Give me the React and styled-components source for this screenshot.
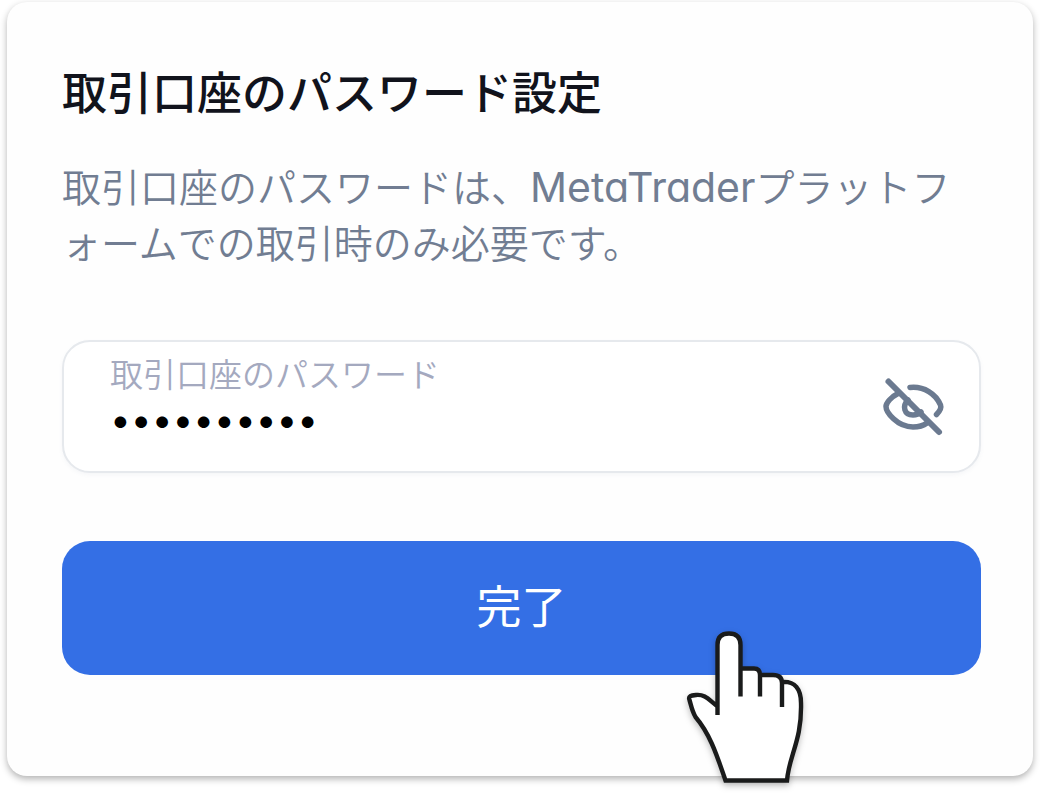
import React, { useState } from "react";
import styled, { createGlobalStyle } from "styled-components";

const GlobalStyle = createGlobalStyle`
  *, *::before, *::after { box-sizing: border-box; }
  body {
    margin: 0;
    background: #ffffff;
    font-family: Inter, "Noto Sans CJK JP", sans-serif;
    font-feature-settings: "cv11";
  }
`;

const Page = styled.main`
  padding: 2px 7px 24px;
`;

const Card = styled.form`
  display: flex;
  flex-direction: column;
  padding: 62px 52px 101px 55px;
  border-radius: 20px;
  background: #fefefe;
  box-shadow: 0 3px 7px rgba(0, 0, 0, 0.3);
`;

const Title = styled.h1`
  margin: 0 0 36px;
  font-size: 45px;
  line-height: 60px;
  font-weight: 500;
  color: #11131c;
`;

const Description = styled.p`
  margin: 0 0 68px;
  font-size: 39px;
  line-height: 56px;
  font-weight: 350;
  color: #717d92;
`;

const Brand = styled.span`
  font-size: 41px;
  line-height: 40px;
  font-weight: 400;
`;

const Field = styled.div`
  display: flex;
  align-items: center;
  gap: 24px;
  margin-bottom: 68px;
  padding: 0 33px 0 46px;
  border: 2px solid #e6e9ed;
  border-radius: 28px;
  background: #ffffff;
  box-shadow: 0 2px 4px rgba(100, 120, 150, 0.06);
`;

const FieldText = styled.div`
  display: flex;
  flex: 1;
  flex-direction: column;
  min-width: 0;
  padding: 9px 0 31px;
`;

const Label = styled.label`
  font-size: 33px;
  line-height: 48px;
  font-weight: 350;
  color: #a4a9bf;
`;

const Input = styled.input`
  width: 100%;
  height: 41px;
  padding: 0;
  border: 0;
  outline: 0;
  background: transparent;
  color: #000000;
  font-family: Inter, sans-serif;
  font-size: 37px;
  line-height: 40px;
`;

const IconButton = styled.button`
  display: flex;
  padding: 0;
  border: 0;
  background: transparent;
  color: #6b7a90;
  cursor: pointer;
`;

const Actions = styled.div`
  position: relative;
`;

const SubmitButton = styled.button`
  display: block;
  width: 100%;
  padding: 37px 24px;
  border: 0;
  border-radius: 28px;
  background: #346fe5;
  color: #ffffff;
  font-family: inherit;
  font-size: 45px;
  line-height: 60px;
  font-weight: 400;
  cursor: pointer;
`;

const Pointer = styled.svg`
  position: absolute;
  top: 88px;
  right: 175px;
  pointer-events: none;
  filter: drop-shadow(0 3px 3px rgba(0, 0, 0, 0.25));
`;

function EyeOff() {
  return (
    <svg width="64" height="60" viewBox="0 0 64 60" fill="none" stroke="currentColor" strokeWidth="5.5" strokeLinecap="round" strokeLinejoin="round" aria-hidden="true">
      <path d="M6.5 4.5 L57 55" strokeWidth="6" />
      <path d="M28 10.5 C42 9 54 17 58.5 28 C60 32 57 35 54.5 37.5" />
      <path d="M16 16.5 C9 20 4 26 4 29.5 C4 35 15 50 31 50 C36 50 41 49 45 46" />
      <path d="M26 23 C20 29 22 38 31 38 C34 38 37 37 39 35" />
    </svg>
  );
}

function HandPointer() {
  return (
    <Pointer width="120" height="164" viewBox="0 0 120 164" aria-hidden="true">
      <path
        d="M31.5 77 V16 Q31.5 4.5 43 4.5 Q54.5 4.5 54.5 16 V39.5 H68 Q74 39.5 74 46 H87 Q96 46 96 53 C109 53 115 60 115 74 C116 112 103 126 101 151.5 H39.5 C32 130 25 106 9.5 88 C6 82 5 76 3.5 71 C2 67 5 66.5 10 66 C19 65 23 71 31.5 77 Z"
        fill="#ffffff"
      />
      <path
        d="M31.5 86 V16 Q31.5 4.5 43 4.5 Q54.5 4.5 54.5 16 V67.5 M54.5 39.5 H68 Q74 39.5 74 46 V67.5 M74 46 H87 Q96 46 96 54 V78 M96 53 C109 52 115 60 115 74 C116 112 103 126 101 151.5 H39.5 C32 130 25 106 9.5 88 C6 82 5 76 3.5 71 C2 67 5 66.5 10 66 C19 65 23 71 31 77"
        fill="none"
        stroke="#1a1b1b"
        strokeWidth="4.4"
      />
    </Pointer>
  );
}

export default function App() {
  const [visible, setVisible] = useState(false);
  const [password, setPassword] = useState("Trading#24");
  return (
    <>
      <GlobalStyle />
      <Page lang="ja">
        <Card onSubmit={(event) => event.preventDefault()}>
          <Title>取引口座のパスワード設定</Title>
          <Description>
            取引口座のパスワードは、<Brand>MetaTrader</Brand>プラットフォームでの取引時のみ必要です。
          </Description>
          <Field>
            <FieldText>
              <Label htmlFor="password">取引口座のパスワード</Label>
              <Input
                id="password"
                type={visible ? "text" : "password"}
                value={password}
                onChange={(event) => setPassword(event.target.value)}
              />
            </FieldText>
            <IconButton type="button" aria-label="パスワードを表示" onClick={() => setVisible(!visible)}>
              <EyeOff />
            </IconButton>
          </Field>
          <Actions>
            <SubmitButton type="submit">完了</SubmitButton>
            <HandPointer />
          </Actions>
        </Card>
      </Page>
    </>
  );
}
